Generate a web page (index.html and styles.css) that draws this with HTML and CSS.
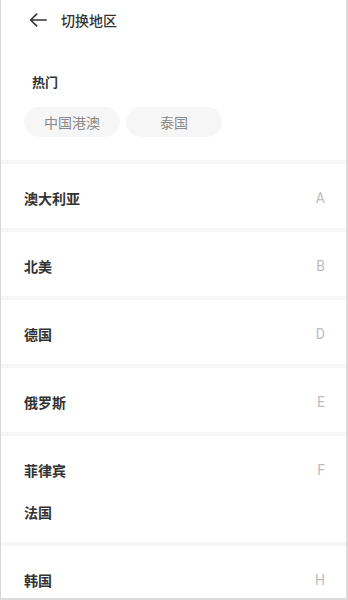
FILE: index.html
```html
<!DOCTYPE html>
<html lang="zh-CN">
<head>
<meta charset="utf-8">
<title>切换地区</title>
<link rel="stylesheet" href="styles.css">
</head>
<body>
<div class="frame">
  <header class="header">
    <svg class="back" width="18" height="14" viewBox="0 0 18 14" aria-hidden="true">
      <path d="M17.2 7H1.6M7.6 1.2L1.6 7L7.6 12.8" fill="none" stroke="#333" stroke-width="1.7" stroke-linecap="round" stroke-linejoin="round"/>
    </svg>
    <span class="title">切换地区</span>
  </header>

  <section class="hot">
    <div class="hot-title">热门</div>
    <div class="chips">
      <span class="chip">中国港澳</span>
      <span class="chip">泰国</span>
    </div>
  </section>

  <section class="group">
    <div class="row"><span class="name">澳大利亚</span><span class="letter">A</span></div>
  </section>
  <section class="group">
    <div class="row"><span class="name">北美</span><span class="letter">B</span></div>
  </section>
  <section class="group">
    <div class="row"><span class="name">德国</span><span class="letter">D</span></div>
  </section>
  <section class="group">
    <div class="row"><span class="name">俄罗斯</span><span class="letter">E</span></div>
  </section>
  <section class="group">
    <div class="row"><span class="name">菲律宾</span><span class="letter">F</span></div>
    <div class="row"><span class="name">法国</span></div>
  </section>
  <section class="group">
    <div class="row"><span class="name">韩国</span><span class="letter">H</span></div>
  </section>
</div>
</body>
</html>
```

FILE: styles.css
```css
* { box-sizing: border-box; }
html, body { margin: 0; padding: 0; background: #fff; }
body {
  font-family: "Noto Sans CJK SC", "Noto Sans", sans-serif;
  color: #333;
}
.frame {
  width: 348px;
  height: 600px;
  overflow: hidden;
  border-left: 1px solid #d6d6d6;
  border-right: 2px solid #dcdcdc;
  border-bottom: 2px solid #dcdcdc;
  background: #fff;
}
.header {
  height: 40px;
  display: flex;
  align-items: center;
  padding-left: 28px;
}
.back { display: block; flex: none; }
.title {
  margin-left: 14px;
  font-size: 14px;
  font-weight: 500;
  line-height: 20px;
  color: #333;
}
.hot {
  padding: 32px 0 23px 23px;
}
.hot-title {
  padding-left: 8px;
  font-size: 13px;
  font-weight: 700;
  line-height: 20px;
  color: #333;
}
.chips {
  display: flex;
  gap: 6px;
  margin-top: 15px;
}
.chip {
  width: 96px;
  height: 30px;
  border-radius: 15px;
  background: #f6f6f6;
  color: #8a8a8a;
  font-size: 14px;
  display: flex;
  align-items: center;
  justify-content: center;
}
.group {
  border-top: 4px solid #f6f6f6;
  padding: 13px 21px 9px 23px;
}
.row {
  height: 42px;
  display: flex;
  align-items: center;
  justify-content: space-between;
}
.name {
  font-size: 14px;
  font-weight: 700;
  color: #333;
}
.letter {
  font-family: "Roboto", "Liberation Sans", sans-serif;
  font-size: 14px;
  color: #bdbdbd;
}
```
